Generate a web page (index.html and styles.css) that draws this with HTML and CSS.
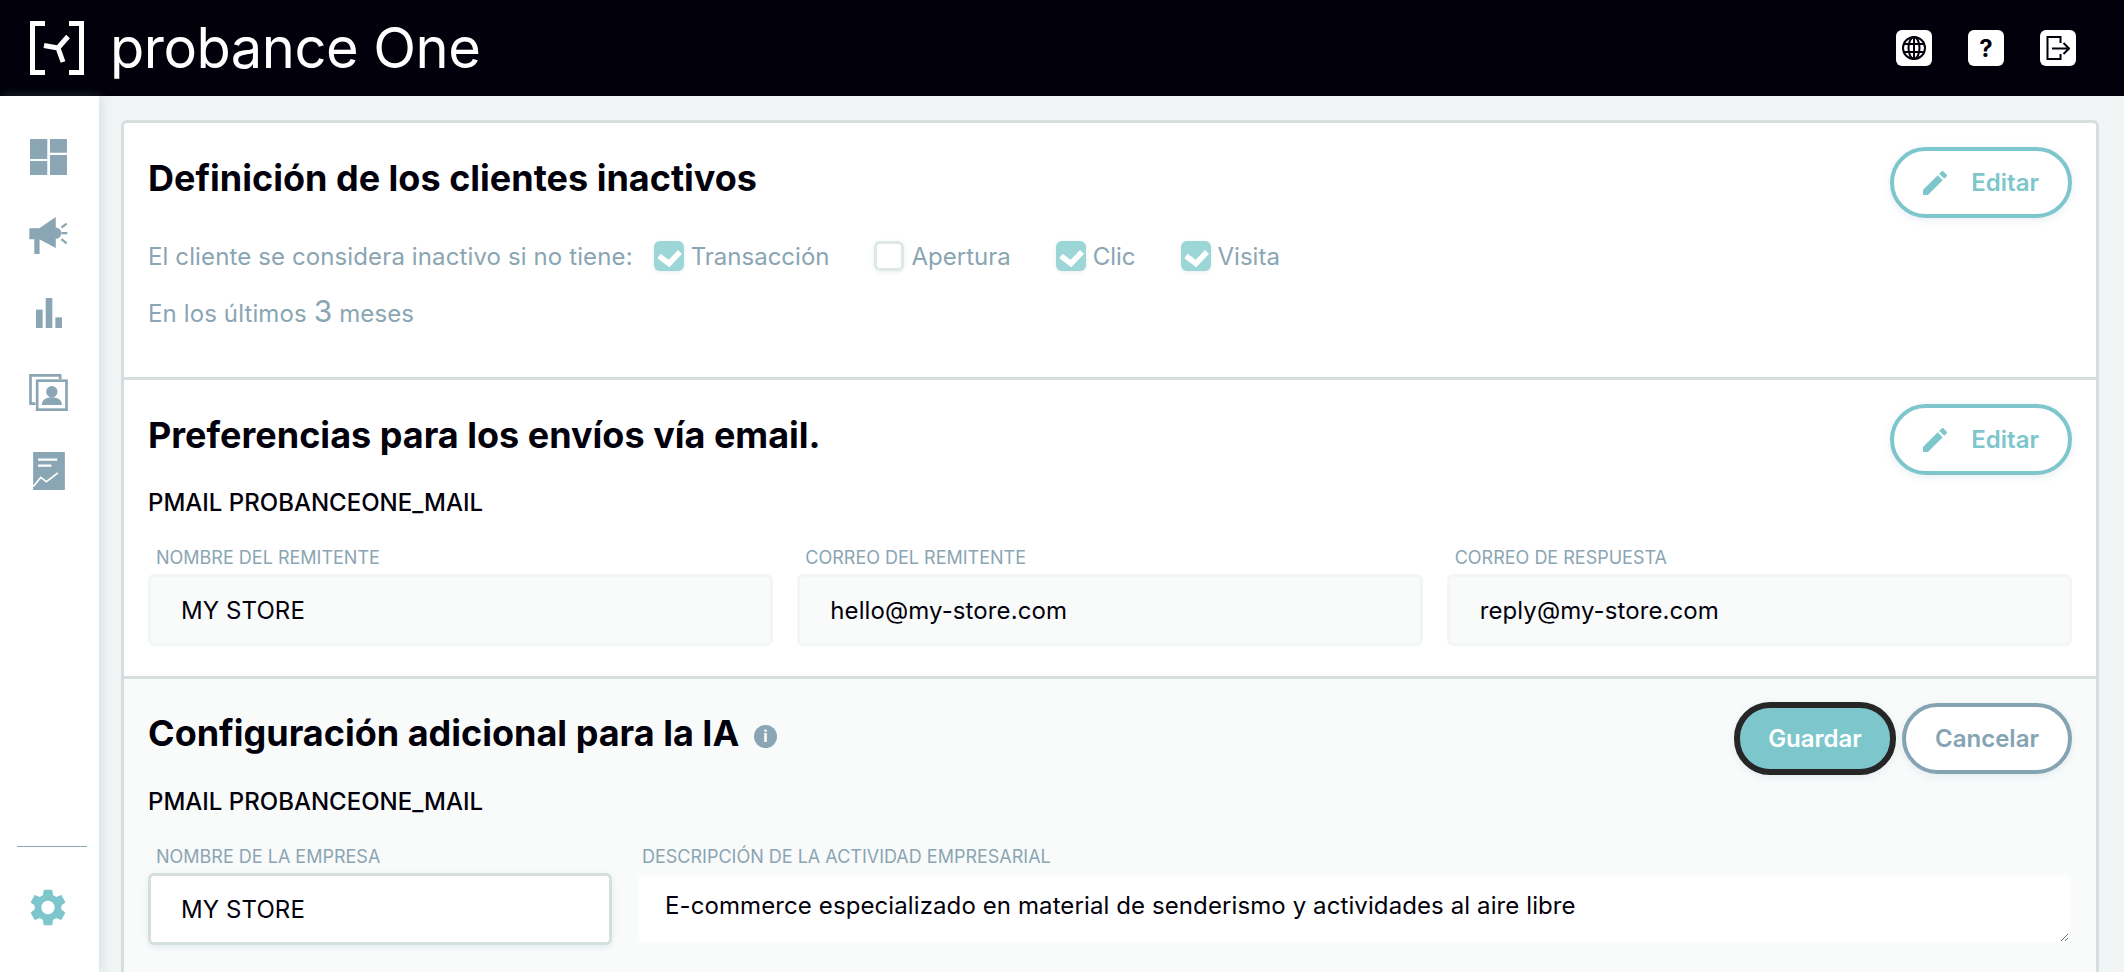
FILE: index.html
```html
<!DOCTYPE html>
<html lang="es">
<head>
    <meta charset="UTF-8">
    <meta name="viewport" content="width=device-width, initial-scale=1.0">
    <title>probance One</title>
    <link rel="stylesheet" href="styles.css">
</head>
<body>

<header class="topbar">
    <div class="brand">
        <svg class="brand-mark" viewBox="0 0 54 54" aria-hidden="true">
            <path d="M15 2.500H2.500V51.500H15M39 2.500H51.500V51.500H39" />
            <path d="M14 24.500L28 27L38 15.500M28 27L33 41" />
        </svg>
        <span class="brand-name">probance One</span>
    </div>
    <div class="top-actions">
        <button class="top-btn" type="button" aria-label="Idioma">
            <svg viewBox="0 0 24 24" class="top-icon">
                <circle cx="12" cy="12" r="11" />
                <ellipse cx="12" cy="12" rx="5.500" ry="11" />
                <path d="M12 1V23M2 8H22M2 16H22" />
            </svg>
        </button>
        <button class="top-btn top-help" type="button">?</button>
        <button class="top-btn" type="button" aria-label="Salir">
            <svg viewBox="0 0 24 24" class="top-icon">
                <path d="M14.500 7V1H1.500V23H14.500V18" />
                <path d="M6 12.500H23M17.500 7L23 12.500L17.500 18" />
            </svg>
        </button>
    </div>
</header>

<div class="layout">
    <nav class="sidebar">
        <a class="nav-item" href="#">
            <svg width="37" height="36" viewBox="0 0 37 36">
                <rect x="0" y="0" width="17.300" height="20" />
                <rect x="20" y="0" width="17" height="13.700" />
                <rect x="0" y="22" width="17.300" height="14" />
                <rect x="20" y="16" width="17" height="20" />
            </svg>
        </a>
        <a class="nav-item" href="#">
            <svg width="39" height="37" viewBox="85 318 116 112">
                <path d="M85 352H115L165 318V412L115 385H85ZM100 385H116V430H100ZM165 350A17 17 0 0 1 165 384Z" />
                <path class="nav-line" d="M182 350L198 338M182 367H200M182 385L198 398" />
            </svg>
        </a>
        <a class="nav-item nav-bars" href="#">
            <svg width="26" height="30" viewBox="105 560 78 90">
                <rect x="105" y="595" width="20" height="55" />
                <rect x="134" y="560" width="20" height="90" />
                <rect x="163" y="618" width="20" height="32" />
            </svg>
        </a>
        <a class="nav-item" href="#">
            <svg width="39" height="37" viewBox="85 792 116 111">
                <path class="nav-frame" d="M104 881H89V796H178V808" />
                <rect class="nav-frame" x="109" y="812" width="88" height="87" />
                <circle cx="153" cy="845" r="17" />
                <path d="M123 885C123 868 138 862 153 862C168 862 183 868 183 885Z" />
            </svg>
        </a>
        <a class="nav-item" href="#">
            <svg width="32" height="38" viewBox="95 1025 96 115">
                <rect x="95" y="1025" width="96" height="115" />
                <path class="nav-cut" d="M110 1048H168M110 1066H150" />
                <path class="nav-trend" d="M95 1130L118 1102L135 1115L170 1088" />
            </svg>
        </a>

        <div class="sidebar-bottom">
            <hr class="sidebar-rule">
            <a class="nav-item nav-settings" href="#">
                <svg width="38" height="37" viewBox="2.500 2 19 20">
                    <path d="M19.140 12.940c.040-.300.060-.610.060-.940 0-.320-.020-.640-.070-.940l2.030-1.580c.180-.140.230-.410.120-.610l-1.920-3.320c-.120-.220-.370-.290-.590-.220l-2.390.960c-.500-.380-1.030-.700-1.620-.940l-.360-2.540c-.040-.240-.240-.410-.480-.410h-3.840c-.240 0-.430.170-.470.410l-.360 2.540c-.590.240-1.130.570-1.620.940l-2.390-.960c-.220-.080-.470 0-.590.220L2.740 8.870c-.120.210-.080.470.120.610l2.030 1.580c-.050.300-.090.630-.090.940s.020.640.070.940l-2.030 1.580c-.180.140-.230.410-.120.610l1.920 3.320c.120.220.370.290.590.220l2.390-.960c.500.380 1.030.700 1.620.940l.360 2.540c.050.240.240.410.480.410h3.840c.240 0 .440-.170.470-.410l.360-2.540c.590-.240 1.130-.560 1.620-.940l2.390.960c.220.080.470 0 .590-.220l1.920-3.320c.120-.220.070-.470-.120-.610l-2.010-1.580zM12 15.600c-1.980 0-3.600-1.620-3.600-3.600s1.620-3.600 3.600-3.600 3.600 1.620 3.600 3.600-1.620 3.600-3.600 3.600z" />
                </svg>
            </a>
        </div>
    </nav>

    <main class="content">
        <div class="card">
            <section class="panel panel-inactive">
                <div class="panel-head">
                    <h2>Definición de los clientes inactivos</h2>
                    <button class="btn btn-edit" type="button">
                        <svg class="pencil" viewBox="3 3 18 18"><path d="M3 17.250V21h3.750L17.810 9.940l-3.750-3.750L3 17.250zM20.710 7.040c.390-.390.390-1.020 0-1.410l-2.340-2.340c-.390-.390-1.020-.390-1.410 0l-1.830 1.830 3.750 3.750 1.830-1.830z" /></svg>
                        Editar
                    </button>
                </div>
                <div class="check-row">
                    <span class="check-intro">El cliente se considera inactivo si no tiene:</span>
                    <span class="check"><span class="box box-on"><svg viewBox="0 0 30 30"><path d="M5 15l10 7.500L26 11" /></svg></span>Transacción</span>
                    <span class="check"><span class="box"></span>Apertura</span>
                    <span class="check"><span class="box box-on"><svg viewBox="0 0 30 30"><path d="M5 15l10 7.500L26 11" /></svg></span>Clic</span>
                    <span class="check"><span class="box box-on"><svg viewBox="0 0 30 30"><path d="M5 15l10 7.500L26 11" /></svg></span>Visita</span>
                </div>
                <p class="period">En los últimos <span class="period-num">3</span> meses</p>
            </section>

            <section class="panel panel-email">
                <div class="panel-head">
                    <h2>Preferencias para los envíos vía email.</h2>
                    <button class="btn btn-edit" type="button">
                        <svg class="pencil" viewBox="3 3 18 18"><path d="M3 17.250V21h3.750L17.810 9.940l-3.750-3.750L3 17.250zM20.710 7.040c.390-.390.390-1.020 0-1.410l-2.340-2.340c-.390-.390-1.020-.390-1.410 0l-1.830 1.830 3.750 3.750 1.830-1.830z" /></svg>
                        Editar
                    </button>
                </div>
                <h3 class="pmail">PMAIL PROBANCEONE_MAIL</h3>
                <div class="fields fields-three">
                    <div class="field">
                        <label>Nombre del remitente</label>
                        <input class="input input-off" type="text" value="MY STORE" readonly>
                    </div>
                    <div class="field">
                        <label>Correo del remitente</label>
                        <input class="input input-off" type="text" value="hello@my-store.com" readonly>
                    </div>
                    <div class="field">
                        <label>Correo de respuesta</label>
                        <input class="input input-off" type="text" value="reply@my-store.com" readonly>
                    </div>
                </div>
            </section>

            <section class="panel panel-ai">
                <div class="panel-head">
                    <h2>Configuración adicional para la IA <span class="info">i</span></h2>
                    <div class="head-actions">
                        <button class="btn btn-save" type="button">Guardar</button>
                        <button class="btn btn-cancel" type="button">Cancelar</button>
                    </div>
                </div>
                <h3 class="pmail">PMAIL PROBANCEONE_MAIL</h3>
                <div class="fields fields-ai">
                    <div class="field">
                        <label>Nombre de la empresa</label>
                        <input class="input input-on" type="text" value="MY STORE">
                    </div>
                    <div class="field field-wide">
                        <label>Descripción de la actividad empresarial</label>
                        <textarea class="input textarea">E-commerce especializado en material de senderismo y actividades al aire libre</textarea>
                    </div>
                </div>
            </section>
        </div>
    </main>
</div>

</body>
</html>
```

FILE: styles.css
```css
* {
    box-sizing: border-box;
}

html, body {
    height: 100%;
}

body {
    margin: 0;
    display: flex;
    flex-direction: column;
    height: 100vh;
    overflow: hidden;
    font-family: Inter, "Liberation Sans", sans-serif;
    background-color: #f0f4f5;
    color: #02000a;
}

/* top bar */
.topbar {
    flex: none;
    height: 96px;
    background-color: #02000a;
    display: flex;
    align-items: center;
    justify-content: space-between;
    padding: 0 48px 0 30px;
}

.brand {
    display: flex;
    align-items: center;
    gap: 26px;
}

.brand-mark {
    width: 54px;
    height: 54px;
    fill: none;
    stroke: #fff;
    stroke-width: 5;
}

.brand-name {
    color: #fff;
    font-size: 56px;
    font-weight: 400;
    letter-spacing: -0.5px;
    line-height: 1;
}

.top-actions {
    display: flex;
    gap: 36px;
}

.top-btn {
    width: 36px;
    height: 36px;
    padding: 0;
    border: none;
    border-radius: 6px;
    background-color: #fff;
    color: #02000a;
    display: flex;
    align-items: center;
    justify-content: center;
}

.top-help {
    font-family: Inter, sans-serif;
    font-size: 24px;
    font-weight: 700;
}

.top-icon {
    width: 24px;
    height: 24px;
    fill: none;
    stroke: #02000a;
    stroke-width: 2;
}

/* layout */
.layout {
    flex: 1;
    display: flex;
    min-height: 0;
}

.sidebar {
    flex: none;
    width: 99px;
    background-color: #fff;
    box-shadow: 2px 0 10px rgba(133, 164, 179, 0.25);
    display: flex;
    flex-direction: column;
    padding-top: 22px;
}

.nav-item {
    height: 78.500px;
    display: flex;
    align-items: center;
    justify-content: center;
    padding-right: 2px;
    fill: #8aa5b3;
    stroke: none;
}

.nav-bars svg {
    margin-bottom: 3px;
}

.nav-line {
    fill: none;
    stroke: #8aa5b3;
    stroke-width: 7;
}

.nav-frame {
    fill: none;
    stroke: #8aa5b3;
    stroke-width: 8;
}

.nav-cut {
    fill: none;
    stroke: #fff;
    stroke-width: 7;
}

.nav-trend {
    fill: none;
    stroke: #fff;
    stroke-width: 5;
}

.sidebar-bottom {
    margin-top: auto;
    padding-bottom: 46px;
}

.sidebar-rule {
    width: 70px;
    height: 1px;
    margin: 0 0 42px 17px;
    border: none;
    background-color: #8aa5b3;
}

.nav-settings {
    height: 37px;
    fill: #7dc7cc;
    padding-right: 3px;
}

.content {
    flex: 1;
    padding: 24px 25px 0 22px;
    min-width: 0;
}

.card {
    background-color: #fff;
    border: 3px solid #d5e0de;
    border-radius: 6px 6px 0 0;
}

/* panels */
.panel {
    padding: 24px 24px 0;
}

.panel + .panel {
    border-top: 3px solid #d5e0de;
}

.panel-inactive {
    padding-bottom: 51px;
}

.panel-email {
    padding-bottom: 30px;
}

.panel-ai {
    background-color: #f9fbfb;
    padding-top: 23px;
    padding-bottom: 40px;
}

.panel-head {
    display: flex;
    align-items: flex-start;
    justify-content: space-between;
}

h2 {
    margin: 11px 0 0;
    font-size: 36px;
    line-height: 40px;
    font-weight: 700;
}

.info {
    display: inline-block;
    width: 23px;
    height: 23px;
    margin-left: 6px;
    border-radius: 50%;
    background-color: #8aa5b3;
    color: #fff;
    font-size: 16px;
    line-height: 23px;
    text-align: center;
    vertical-align: 4px;
}

.btn {
    height: 71px;
    border-radius: 36px;
    font-family: Inter, sans-serif;
    font-size: 24px;
    font-weight: 600;
    cursor: pointer;
    box-shadow: 0 2px 8px rgba(133, 164, 179, 0.2);
}

.btn-edit {
    width: 182px;
    background-color: #fff;
    border: 4px solid #7dc7cc;
    color: #7dc7cc;
    display: flex;
    align-items: center;
    justify-content: space-between;
    padding: 0 29px 0 29px;
}

.pencil {
    width: 24px;
    height: 24px;
    fill: #7dc7cc;
}

.head-actions {
    display: flex;
    align-items: center;
    gap: 6px;
}

.btn-save {
    width: 162px;
    height: 73px;
    background-color: #7dc7cc;
    border: 6px solid #262626;
    color: #fff;
}

.btn-cancel {
    width: 170px;
    background-color: #fff;
    border: 4px solid #85a4b3;
    color: #85a4b3;
}

/* first panel */
.check-row {
    display: flex;
    align-items: center;
    height: 30px;
    margin-top: 23px;
    font-size: 24px;
    color: #8aa5b3;
}

.check-intro {
    margin-right: 21px;
    letter-spacing: 0.12px;
}

.check {
    display: flex;
    align-items: center;
    gap: 7px;
    margin-right: 45px;
}

.box {
    width: 30px;
    height: 30px;
    border: 3px solid #e0e8e7;
    border-radius: 6px;
    background-color: #fff;
    box-shadow: 0 1px 4px rgba(133, 164, 179, 0.2);
}

.box-on {
    border: none;
    background-color: #9dd6d6;
}

.box svg {
    display: block;
    width: 30px;
    height: 30px;
    fill: none;
    stroke: #fff;
    stroke-width: 5.500;
}

.period {
    margin: 25px 0 0;
    height: 30px;
    line-height: 30px;
    font-size: 24px;
    letter-spacing: 0.12px;
    color: #8aa5b3;
}

.period-num {
    font-size: 30px;
}

/* fields */
.pmail {
    margin: 14px 0 0;
    font-size: 24px;
    line-height: 28px;
    font-weight: 500;
}

.panel-ai .pmail {
    margin-top: 13px;
}

.fields {
    display: grid;
    gap: 24px;
    margin-top: 30px;
}

.fields-three {
    grid-template-columns: repeat(3, 1fr);
}

.fields-ai {
    grid-template-columns: 464px 1fr;
}

.field label {
    display: block;
    height: 22px;
    line-height: 22px;
    padding-left: 8px;
    margin-bottom: 5px;
    font-size: 18px;
    color: #8aa5b3;
    text-transform: uppercase;
}

.field-wide label {
    padding-left: 6px;
}

.input {
    display: block;
    width: 100%;
    height: 72px;
    padding: 0 30px;
    border: 3px solid #f3f6f6;
    border-radius: 6px;
    font-family: Inter, sans-serif;
    font-size: 24px;
    letter-spacing: 0.1px;
    color: #02000a;
    outline: none;
}

.input-off {
    background-color: #f9fbfb;
}

.input-on {
    background-color: #fff;
    border-color: #d5e0de;
    box-shadow: 0 2px 6px rgba(133, 164, 179, 0.2);
}

.textarea {
    padding: 16px 26px;
    background-color: #fff;
    border-color: #fbfcfc;
    line-height: 28px;
}
```
